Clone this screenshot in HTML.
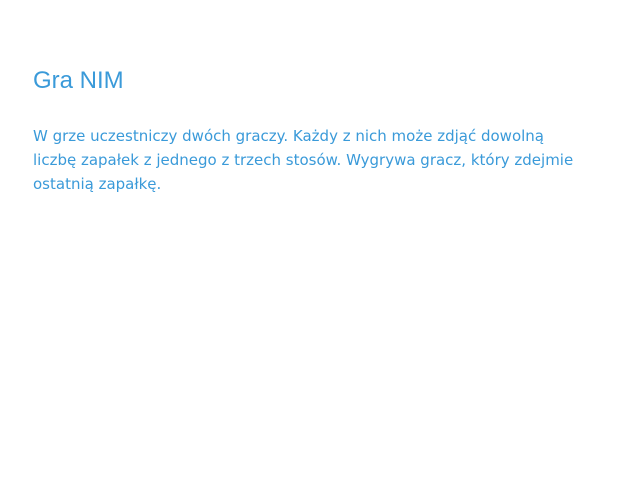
<!DOCTYPE html>
<html><head><meta charset="utf-8"><style>
html,body{margin:0;padding:0;background:#fff;width:640px;height:480px;overflow:hidden}
body{font-family:"DejaVu Sans","Liberation Sans",sans-serif;color:#3a9ad9}
h1{position:absolute;left:33px;top:66px;margin:0;font-weight:normal;line-height:30px;font-family:"Liberation Sans","DejaVu Sans",sans-serif;font-size:24px}
p{position:absolute;left:33px;top:124px;margin:0;font-size:15px;line-height:24px;white-space:nowrap}
</style></head><body>
<h1>Gra NIM</h1>
<p>W grze uczestniczy dwóch graczy. Każdy z nich może zdjąć dowolną<br>liczbę zapałek z jednego z trzech stosów. Wygrywa gracz, który zdejmie<br>ostatnią zapałkę.</p>
</body></html>
